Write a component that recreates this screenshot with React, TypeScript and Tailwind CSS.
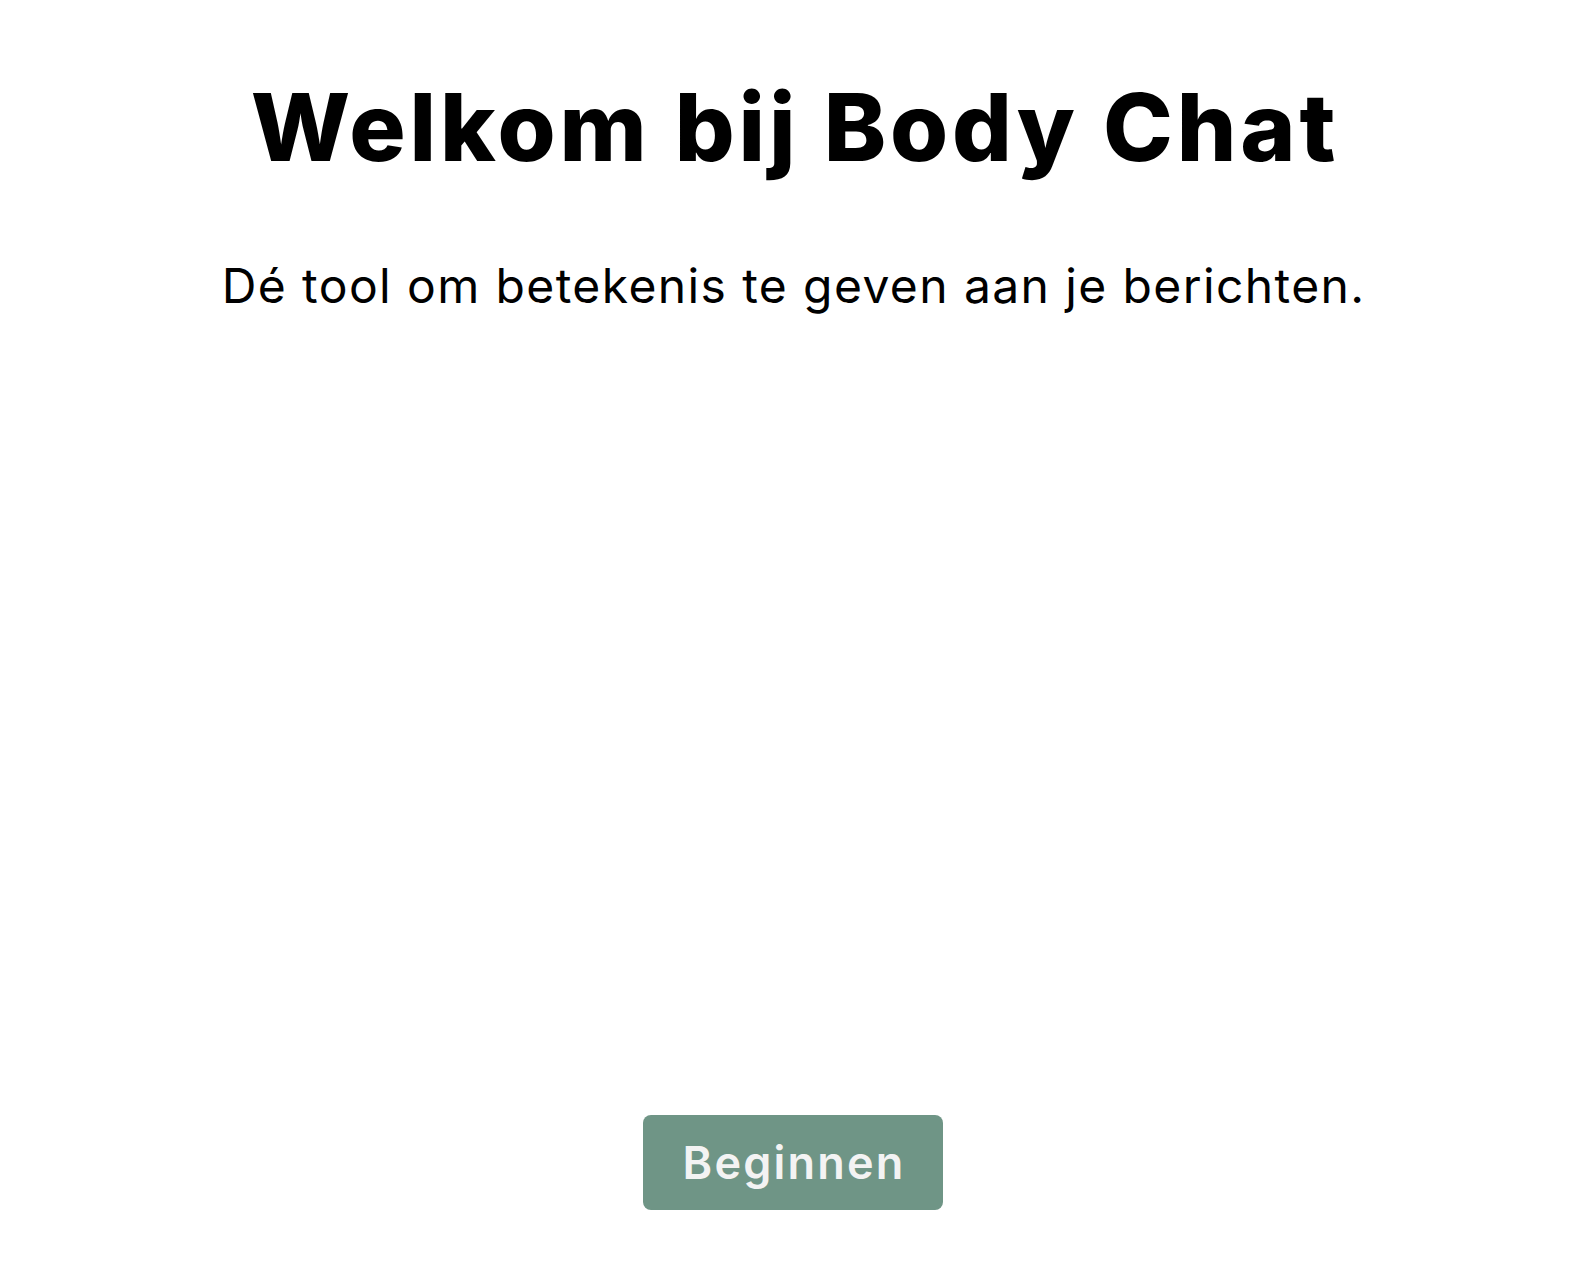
export default function App() {
  return (
    <div className="flex h-[1266px] w-full flex-col items-center bg-white pb-[56px] pt-[80px] font-['Inter',sans-serif] text-black">
      <h1 className="pl-[3.8px] text-[94px] font-extrabold leading-none tracking-[3.8px]">Welkom bij Body Chat</h1>
      <p className="mt-[88px] pl-[1.4px] text-[48px] font-normal leading-none tracking-[1.4px]">
        Dé tool om betekenis te geven aan je berichten.
      </p>
      <div className="flex-1" />
      <button className="flex h-[95px] w-[300px] items-center justify-center rounded-lg bg-[#6f9586] pl-[2.2px] text-[45px] font-semibold tracking-[2.2px] text-[#f3f3f3]">
        Beginnen
      </button>
    </div>
  );
}
